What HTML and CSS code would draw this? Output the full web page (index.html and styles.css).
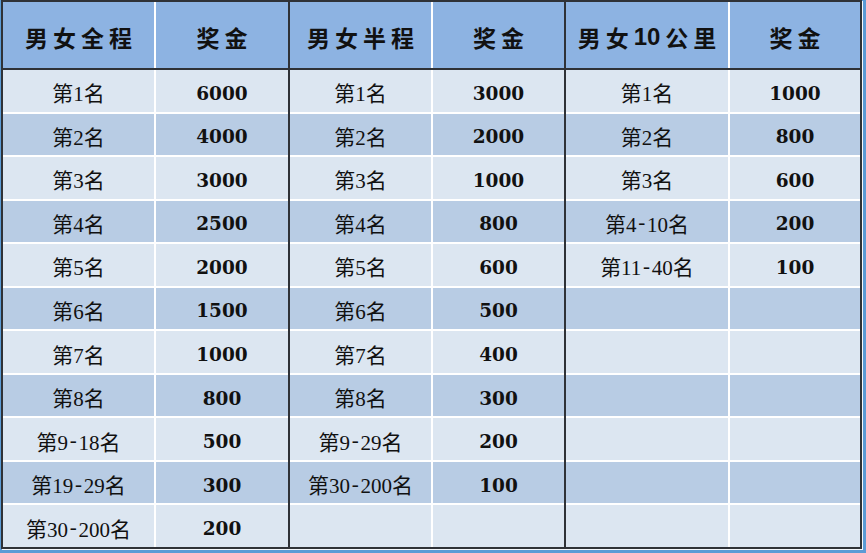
FILE: index.html
```html
<!DOCTYPE html>
<html lang="zh">
<head>
<meta charset="utf-8">
<title>奖金</title>
<link rel="stylesheet" href="styles.css">
</head>
<body>
<div class="frame">
  <div class="board">
    <div class="table t1">
      <div class="thead"><div class="th">男女全程</div><div class="th">奖金</div></div>
      <div class="tbody">
        <div class="td r">第1名</div><div class="td n">6000</div>
        <div class="td r">第2名</div><div class="td n">4000</div>
        <div class="td r">第3名</div><div class="td n">3000</div>
        <div class="td r">第4名</div><div class="td n">2500</div>
        <div class="td r">第5名</div><div class="td n">2000</div>
        <div class="td r">第6名</div><div class="td n">1500</div>
        <div class="td r">第7名</div><div class="td n">1000</div>
        <div class="td r">第8名</div><div class="td n">800</div>
        <div class="td r">第9<span class="dash">-</span>18名</div><div class="td n">500</div>
        <div class="td r">第19<span class="dash">-</span>29名</div><div class="td n">300</div>
        <div class="td r">第30<span class="dash">-</span>200名</div><div class="td n">200</div>
      </div>
    </div>
    <div class="table t2">
      <div class="thead"><div class="th">男女半程</div><div class="th">奖金</div></div>
      <div class="tbody">
        <div class="td r">第1名</div><div class="td n">3000</div>
        <div class="td r">第2名</div><div class="td n">2000</div>
        <div class="td r">第3名</div><div class="td n">1000</div>
        <div class="td r">第4名</div><div class="td n">800</div>
        <div class="td r">第5名</div><div class="td n">600</div>
        <div class="td r">第6名</div><div class="td n">500</div>
        <div class="td r">第7名</div><div class="td n">400</div>
        <div class="td r">第8名</div><div class="td n">300</div>
        <div class="td r">第9<span class="dash">-</span>29名</div><div class="td n">200</div>
        <div class="td r">第30<span class="dash">-</span>200名</div><div class="td n">100</div>
        <div class="td r"></div><div class="td n"></div>
      </div>
    </div>
    <div class="table t3">
      <div class="thead"><div class="th">男女<span class="hd">10</span>公里</div><div class="th">奖金</div></div>
      <div class="tbody">
        <div class="td r">第1名</div><div class="td n">1000</div>
        <div class="td r">第2名</div><div class="td n">800</div>
        <div class="td r">第3名</div><div class="td n">600</div>
        <div class="td r">第4<span class="dash">-</span>10名</div><div class="td n">200</div>
        <div class="td r">第11<span class="dash">-</span>40名</div><div class="td n">100</div>
        <div class="td r"></div><div class="td n"></div>
        <div class="td r"></div><div class="td n"></div>
        <div class="td r"></div><div class="td n"></div>
        <div class="td r"></div><div class="td n"></div>
        <div class="td r"></div><div class="td n"></div>
        <div class="td r"></div><div class="td n"></div>
      </div>
    </div>
  </div>
</div>
</body>
</html>
```
FILE: styles.css
```css
html, body {
  margin: 0;
  padding: 0;
  background: #ffffff;
}
.frame {
  width: 866px;
  height: 553px;
  box-sizing: border-box;
  background: #5b9bd5;
  padding: 0 4px 4px 1px;
}
.board {
  height: 100%;
  box-sizing: border-box;
  border: 2px solid #2f3237;
  background: #2f3237;
  display: flex;
  gap: 2px;
  box-shadow: 1px 1px 0 #f4f7fb;
}
.table {
  display: flex;
  flex-direction: column;
  background: #ffffff;
}
.t1 { --c1: 151px; --c2: 132px; }
.t2 { --c1: 141px; --c2: 131px; }
.t3 { --c1: 162px; --c2: 130px; }
.thead {
  display: grid;
  grid-template-columns: var(--c1) var(--c2);
  column-gap: 2px;
  height: 66px;
  border-bottom: 2px solid #2f3237;
}
.th {
  background: #8db3e2;
  display: flex;
  align-items: center;
  justify-content: center;
  padding: 4px 0 0 5px;
  font-family: "Noto Sans CJK SC", sans-serif;
  font-weight: 700;
  font-size: 23px;
  letter-spacing: 5px;
  color: #111111;
}
.hd {
  font-family: "Liberation Sans", sans-serif;
  letter-spacing: 0;
  font-size: 24px;
  margin-right: 5px;
}
.tbody {
  flex: 1;
  display: grid;
  grid-template-columns: var(--c1) var(--c2);
  grid-template-rows: repeat(11, 1fr);
  gap: 2px;
}
.td {
  display: flex;
  align-items: center;
  justify-content: center;
  padding-top: 3px;
  color: #111111;
}
.tbody .td:nth-child(4n+1), .tbody .td:nth-child(4n+2) { background: #dce6f1; }
.tbody .td:nth-child(4n+3), .tbody .td:nth-child(4n+4) { background: #b8cce4; }
.r {
  font-family: "Liberation Serif", "Noto Sans CJK SC", serif;
  font-size: 21px;
}
.dash {
  display: inline-block;
  width: 10.5px;
  text-align: center;
}
.n {
  font-family: "DejaVu Serif", serif;
  font-weight: 700;
  font-size: 18.5px;
  padding-top: 5px;
}
```
